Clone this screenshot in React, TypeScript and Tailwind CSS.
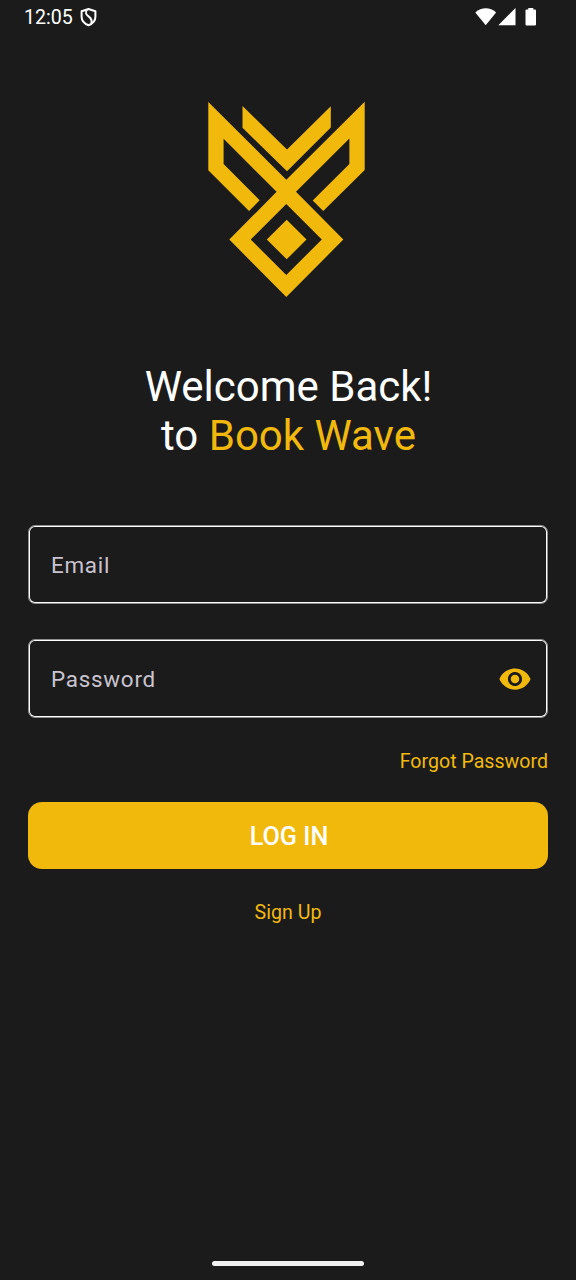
import React from "react";

function StatusBar() {
  return (
    <header className="flex h-[34px] items-center justify-between pl-6 pr-[39px] text-white">
      <div className="flex items-center gap-[7px]">
        <span className="pt-[2px] text-[19.6px] leading-6">12:05</span>
        <svg width="17" height="20" viewBox="0 0 17 20" fill="none" stroke="currentColor" strokeWidth="2">
          <path d="M8.5 2L15.4 4.3v5.500c0 4-2.8 7-6.9 8.400C4.400 16.800 1.600 13.800 1.600 9.800V4.300z" strokeLinejoin="round" />
          <path d="M6.800 2.800C5 6 6 7.600 8.800 9.600S12.300 13.500 11.200 16.600" />
        </svg>
      </div>
      <svg width="62" height="20" viewBox="475 7 62 20" fill="currentColor">
        <path d="M475.3 12.4C481.5 6.9 490 6.9 496.1 12.4L485.7 25.2Z" />
        <path d="M498.3 25.2H515.5V8Z" />
        <path d="M528.3 8h5v1.6h1.7a1 1 0 0 1 1 1V24.6a1 1 0 0 1-1 1h-8.500a1 1 0 0 1-1-1V10.6a1 1 0 0 1 1-1h1.8Z" />
      </svg>
    </header>
  );
}

function Logo() {
  return (
    <svg width="160" height="198" viewBox="207 101 160 198" fill="#f2b90d" className="ml-[207px] mt-[67px] block">
      <path d="M242.5 106L287 149.5L330.8 106.3V127.5L287 171.2L242.5 127.8Z" />
      <path
        fillRule="evenodd"
        d="M208.3 102L286.3 179.7L364.7 101.8V170L323.2 211L312.7 200.5L349.4 164V138.5L296 191.8L343.3 239.6L286.3 297L229.3 239.6L276.6 191.8L223.6 138.7V164L259.7 200.3L249 211L208.3 170.3ZM286.3 204L250.7 239.5L286.3 275L321.8 239.5Z"
      />
      <path d="M286.7 219.7L306.5 239.5L286.7 259.3L266.8 239.5Z" />
    </svg>
  );
}

function Field({ label, children }: { label: string; children?: React.ReactNode }) {
  return (
    <div className="flex h-[79px] items-center justify-between rounded-[7px] border border-white/50 pl-[22px] pr-[15px] pt-px shadow-[inset_0_0_0_1px_#ffffff]">
      <span className="text-[22.4px] leading-8 tracking-[0.75px] text-[#cac4d0]">{label}</span>
      {children}
    </div>
  );
}

export default function App() {
  return (
    <div className="flex h-[1280px] w-[576px] flex-col bg-[#1b1b1b] font-['Roboto',sans-serif]">
      <StatusBar />
      <Logo />
      <h1 className="mt-[63px] pl-px text-center text-[42px] leading-[49px] text-white">
        Welcome Back!
        <br />
        to <span className="text-[#f2b90d]">Book Wave</span>
      </h1>
      <main className="mt-[65px] flex flex-col px-7">
        <Field label="Email" />
        <div className="mt-[35px]">
          <Field label="Password">
            <svg width="34" height="34" viewBox="0 0 24 24" fill="#f2b90d">
              <path d="M12 4.5C7 4.5 2.73 7.61 1 12c1.73 4.39 6 7.5 11 7.5s9.27-3.11 11-7.5c-1.73-4.39-6-7.5-11-7.5zM12 17c-2.76 0-5-2.24-5-5s2.24-5 5-5 5 2.24 5 5-2.24 5-5 5zm0-8c-1.66 0-3 1.34-3 3s1.34 3 3 3 3-1.34 3-3-1.34-3-3-3z" />
            </svg>
          </Field>
        </div>
        <a className="mt-[32px] self-end text-[19.6px] leading-6 text-[#f2b90d]">Forgot Password</a>
        <button className="mt-[28px] h-[67px] rounded-[14px] bg-[#f2b90d] pl-[2px] pt-[2px] text-[25.2px] font-medium text-white">LOG IN</button>
        <a className="mt-[32px] self-center text-[19.6px] leading-6 text-[#f2b90d]">Sign Up</a>
      </main>
      <div className="mb-[14px] mt-auto h-[5px] w-[152px] self-center rounded-full bg-[#f1f1f1]" />
    </div>
  );
}
